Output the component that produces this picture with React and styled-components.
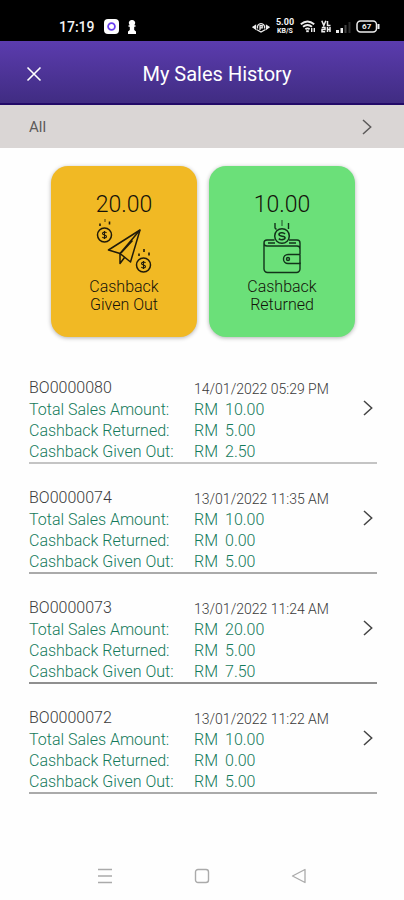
import React from "react";
import styled, { createGlobalStyle } from "styled-components";

const GlobalStyle = createGlobalStyle`
  *, *::before, *::after { box-sizing: border-box; }
  body {
    margin: 0;
    background: #fefefe;
    color: #4a4a4a;
    font-family: Roboto, "Liberation Sans", sans-serif;
  }
  h1, h2, p, ul, dl, dd, dt { margin: 0; padding: 0; font-weight: inherit; }
  button { border: 0; padding: 0; background: none; font: inherit; color: inherit; cursor: pointer; }
  svg { display: block; flex: none; }
`;

const Screen = styled.div`
  display: flex;
  flex-direction: column;
  min-height: 100vh;
`;

const StatusBar = styled.div`
  display: flex;
  align-items: center;
  justify-content: space-between;
  height: 41px;
  padding: 12px 24px 0 59px;
  background: #000;
  color: #f4f4f4;
`;

const StatusGroup = styled.div`
  display: flex;
  align-items: center;
  gap: ${(p) => p.$gap}px;
`;

const Clock = styled.span`
  font-size: 14px;
  line-height: 16px;
  font-weight: 500;
`;

const NetSpeed = styled.span`
  display: flex;
  flex-direction: column;
  align-items: center;
  width: 20px;
  font-size: 9px;
  line-height: 9px;
  font-weight: 700;
`;

const SpeedUnit = styled.span`
  font-size: 7px;
  line-height: 8px;
`;

const Header = styled.header`
  display: grid;
  grid-template-columns: 20px 1fr;
  align-items: center;
  height: 64px;
  padding: 4px 14px 0 24px;
  background: linear-gradient(#5b3cae, #402c82);
  border-bottom: 2px solid #220a68;
  color: #fff;
`;

const IconButton = styled.button`
  display: flex;
  align-items: center;
  justify-content: center;
  width: 20px;
  height: 24px;
`;

const Title = styled.h1`
  font-size: 20px;
  line-height: 24px;
  text-align: center;
`;

const FilterBar = styled.button`
  display: flex;
  align-items: center;
  justify-content: space-between;
  width: 100%;
  height: 43px;
  padding: 0 32px 0 29px;
  background: #dad6d5;
  color: #5c5a5a;
  text-align: left;
`;

const FilterLabel = styled.span`
  font-size: 15px;
  line-height: 20px;
`;

const Summary = styled.section`
  display: flex;
  justify-content: center;
  gap: 12px;
  padding: 18px 24px 0 26px;
`;

const Card = styled.article`
  display: flex;
  flex-direction: column;
  align-items: center;
  width: 146px;
  padding: 24px 8px 23px;
  border-radius: 17px;
  background: ${(p) => p.$color};
  box-shadow: 0 1px 4px rgba(0, 0, 0, 0.3);
  color: #14120a;
`;

const Amount = styled.p`
  font-size: 23px;
  line-height: 29px;
  font-weight: 300;
`;

const CardLabel = styled.h2`
  width: 90px;
  margin-top: 3px;
  font-size: 16px;
  line-height: 18px;
  font-weight: 300;
  text-align: center;
`;

const History = styled.ul`
  display: flex;
  flex-direction: column;
  gap: 23px;
  flex: 1;
  padding: 40px 27px 0 29px;
  list-style: none;
`;

const Sale = styled.li`
  display: grid;
  grid-template-columns: 1fr 24px;
  border-bottom: 2px solid ${(p) => p.$line};
`;

const Details = styled.dl`
  display: grid;
  grid-template-columns: 165px 1fr;
  grid-template-rows: 22px repeat(3, 21px);
  font-size: 16px;
  line-height: 21px;
  font-weight: 300;
  color: #147a5b;
`;

const SaleCode = styled.dt`
  color: #3a3a3a;
`;

const SaleDate = styled.dd`
  padding-top: 2px;
  font-size: 14px;
  line-height: 20px;
  color: #3a3a3a;
`;

const Money = styled.dd`
  display: flex;
  gap: 7px;
`;

const OpenButton = styled.button`
  display: flex;
  justify-content: flex-end;
  align-items: center;
  width: 20px;
  height: 24px;
  margin-top: 19px;
  color: #444;
`;

const NavBar = styled.nav`
  display: flex;
  align-items: center;
  justify-content: center;
  gap: 77px;
  height: 48px;
  color: #aaa;
`;

function CloseIcon() {
  return (
    <svg width="16" height="16" viewBox="0 0 16 16" stroke="currentColor" strokeWidth="1.6">
      <path d="M1.5 1.5 14.5 14.5M14.5 1.5 1.5 14.5" />
    </svg>
  );
}

function Chevron() {
  return (
    <svg width="10" height="16" viewBox="0 0 10 16" fill="none" stroke="currentColor" strokeWidth="1.5">
      <path d="M1 1 8.700 8 1 15" />
    </svg>
  );
}

function RecorderIcon() {
  return (
    <svg width="15" height="15" viewBox="0 0 15 15">
      <rect width="15" height="15" rx="4" fill="#fff" />
      <circle cx="7.5" cy="7.5" r="3.4" fill="none" stroke="#6a3ff0" strokeWidth="1.8" />
    </svg>
  );
}

function PawnIcon() {
  return (
    <svg width="8" height="14" viewBox="0 0 8 14" fill="#fff">
      <path d="M4 0a3 3 0 0 1 2.200 5.200H7.500v1.600H6.200V10L8 11.500V14H0v-2.500L1.800 10V6.800H.5V5.200h1.300A3 3 0 0 1 4 0z" />
    </svg>
  );
}

function EyeIcon() {
  return (
    <svg width="18" height="12" viewBox="0 0 18 12" fill="none" stroke="#eee" strokeWidth="1.3">
      <path d="M3.500 4.500 1 6.200l2.500 1.700zM14.500 4.500 17 6.200l-2.500 1.700z" fill="#eee" />
      <path d="M5.600 7.500A3.600 3.600 0 1 1 12.400 7.500" />
      <path d="M8 9V4.600h2.200v2.300H8M4.500 8.500 9 11l4.500-2.500" />
    </svg>
  );
}

function WifiIcon() {
  return (
    <svg width="16" height="13" viewBox="0 0 16 13" fill="none" stroke="#eee" strokeWidth="1.9">
      <path d="M.8 4.200Q7.500-1.300 14.200 4.200M3 6.800q4.500-3.600 9 0M5.400 9.200q2.100-1.600 4.200 0" />
      <path d="M6.200 11.200h2.600" />
      <path d="M11.700 12V8M14.300 8v4" strokeWidth="1.4" />
    </svg>
  );
}

function VolteIcon() {
  return (
    <svg width="10" height="13" viewBox="0 0 10 13" fill="none" stroke="#eee" strokeWidth="1.5">
      <path d="M.8.8 2.800 5.500 4.800.8M6.500 1v4.500H9.500M.8 7.500h3.200v2H1v2.200h3.200M6.500 7v5M9 7v5M6.500 9.500H9" />
    </svg>
  );
}

function SignalIcon() {
  return (
    <svg width="15" height="12" viewBox="0 0 15 12" fill="#eee">
      <rect x="0" y="9" width="3" height="3" />
      <rect x="4.5" y="7" width="2.5" height="5" />
      <rect x="8.5" y="4" width="2" height="8" fill="#444" />
      <rect x="12.5" y="1" width="2" height="11" fill="#2b2b2b" />
    </svg>
  );
}

function BatteryIcon() {
  return (
    <svg width="24" height="13" viewBox="0 0 24 13" fill="none" stroke="#eee" strokeWidth="1.5">
      <rect x="1" y="1" width="19.5" height="11" rx="3.5" />
      <path d="M22.500 4v5" strokeWidth="2" />
      <text x="10.7" y="9.3" textAnchor="middle" fontSize="8" fontWeight="700" fill="#eee" stroke="none">67</text>
    </svg>
  );
}

function SendMoneyIcon() {
  return (
    <svg width="56" height="56" viewBox="0 0 56 56" fill="none" stroke="#211b0a" strokeWidth="1.5" strokeLinejoin="round">
      <path d="M44 11 12.500 31l11.500 3.500L34.500 43z" />
      <path d="M44 11 24 34.500v10l4.500-6M25 34 36.500 21.500" />
      <circle cx="8.5" cy="16" r="7" />
      <path d="M10.500 13.800c-1-1.200-4-.9-4 .7 0 1.900 4 1 4 3 0 1.700-3 2-4.200.5M8.500 12v8" strokeWidth="1.1" />
      <circle cx="47.5" cy="46" r="7" />
      <path d="M49.500 43.800c-1-1.200-4-.9-4 .7 0 1.900 4 1 4 3 0 1.700-3 2-4.200.5M47.500 42v8" strokeWidth="1.1" />
      <path d="M4 4.500v2.500M13.500 2.500v3M43 34.500V37M53 33.500v3M48 30v3" strokeWidth="1.6" />
      <path d="M9 0v3" opacity=".5" />
    </svg>
  );
}

function WalletIcon() {
  return (
    <svg width="56" height="56" viewBox="0 0 56 56" fill="none" stroke="#12321a" strokeWidth="1.4" strokeLinejoin="round">
      <path d="M20.500 21H13a3 3 0 0 0-3 3v26a3.500 3.500 0 0 0 3.500 3.500h29A3.500 3.500 0 0 0 46 50v-6.500M35 21h8a3 3 0 0 1 3 3v11.500M10 24a3 3 0 0 0 3 3h30a3 3 0 0 1 3 3" />
      <path d="M14 24h7M35 24h7" strokeWidth="1.6" />
      <path d="M46 35.500H34a4.500 4.500 0 0 0 0 9h12v-9" />
      <circle cx="34" cy="40" r="1.5" />
      <circle cx="28" cy="17" r="7.3" strokeWidth="1.5" />
      <path d="M31 15c-1.500-2-6-1.500-6 .6 0 2.300 6 1 6 3.200 0 2.200-4.500 2.500-6.200.8" strokeWidth="1.6" />
      <path d="M21 4v5l1.500 1.500M34.500 4v6" />
      <path d="M28 1v6" opacity=".6" />
    </svg>
  );
}

const cards = [
  { amount: "20.00", label: "Cashback Given Out", color: "#f1b924", Icon: SendMoneyIcon },
  { amount: "10.00", label: "Cashback Returned", color: "#6be079", Icon: WalletIcon },
];

const sales = [
  { code: "BO0000080", date: "14/01/2022 05:29 PM", total: "10.00", returned: "5.00", given: "2.50", line: "#c4c4c4" },
  { code: "BO0000074", date: "13/01/2022 11:35 AM", total: "10.00", returned: "0.00", given: "5.00", line: "#aaaaaa" },
  { code: "BO0000073", date: "13/01/2022 11:24 AM", total: "20.00", returned: "5.00", given: "7.50", line: "#8f8f8f" },
  { code: "BO0000072", date: "13/01/2022 11:22 AM", total: "10.00", returned: "0.00", given: "5.00", line: "#aaaaaa" },
];

function MoneyLine({ label, value }) {
  return (
    <>
      <dt>{label}:</dt>
      <Money>
        <span>RM</span>
        <span>{value}</span>
      </Money>
    </>
  );
}

export default function App() {
  return (
    <Screen>
      <GlobalStyle />
      <StatusBar>
        <StatusGroup $gap={9}>
          <Clock>17:19</Clock>
          <RecorderIcon />
          <PawnIcon />
        </StatusGroup>
        <StatusGroup $gap={5}>
          <EyeIcon />
          <NetSpeed>
            <span>5.00</span>
            <SpeedUnit>KB/S</SpeedUnit>
          </NetSpeed>
          <WifiIcon />
          <VolteIcon />
          <SignalIcon />
          <BatteryIcon />
        </StatusGroup>
      </StatusBar>
      <Header>
        <IconButton aria-label="Close">
          <CloseIcon />
        </IconButton>
        <Title>My Sales History</Title>
      </Header>
      <FilterBar>
        <FilterLabel>All</FilterLabel>
        <Chevron />
      </FilterBar>
      <Summary>
        {cards.map(({ amount, label, color, Icon }) => (
          <Card key={label} $color={color}>
            <Amount>{amount}</Amount>
            <Icon />
            <CardLabel>{label}</CardLabel>
          </Card>
        ))}
      </Summary>
      <History>
        {sales.map((s) => (
          <Sale key={s.code} $line={s.line}>
            <Details>
              <SaleCode>{s.code}</SaleCode>
              <SaleDate>{s.date}</SaleDate>
              <MoneyLine label="Total Sales Amount" value={s.total} />
              <MoneyLine label="Cashback Returned" value={s.returned} />
              <MoneyLine label="Cashback Given Out" value={s.given} />
            </Details>
            <OpenButton aria-label={`Open ${s.code}`}>
              <Chevron />
            </OpenButton>
          </Sale>
        ))}
      </History>
      <NavBar>
        <IconButton aria-label="Recent apps">
          <svg width="16" height="16" viewBox="0 0 16 16" stroke="currentColor" strokeWidth="1.3">
            <path d="M1 1.500h14M1 8h14M1 14.500h14" />
          </svg>
        </IconButton>
        <IconButton aria-label="Home">
          <svg width="16" height="16" viewBox="0 0 16 16" fill="none" stroke="currentColor" strokeWidth="1.4">
            <rect x="1.5" y="1.5" width="13" height="13" rx="2.5" />
          </svg>
        </IconButton>
        <IconButton aria-label="Back">
          <svg width="16" height="16" viewBox="0 0 16 16" fill="none" stroke="currentColor" strokeWidth="1.3" strokeLinejoin="round">
            <path d="M14 1.500v13L1.500 8z" />
          </svg>
        </IconButton>
      </NavBar>
    </Screen>
  );
}
